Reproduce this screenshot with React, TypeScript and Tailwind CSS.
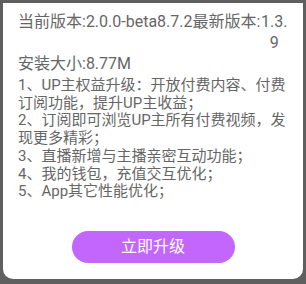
import React from 'react'

const notes = [
  '1、UP主权益升级：开放付费内容、付费订阅功能，提升UP主收益；',
  '2、订阅即可浏览UP主所有付费视频，发现更多精彩；',
  '3、直播新增与主播亲密互动功能；',
  '4、我的钱包，充值交互优化；',
  '5、App其它性能优化；'
]

export default function App() {
  return (
    <div
      className="w-[306px] h-[284px] bg-[#5f5f5f] pt-[3px] px-[3px] pb-[5px]"
      style={{ fontFamily: 'Roboto, "Noto Sans CJK SC", sans-serif' }}
    >
      <div className="h-full bg-white rounded-b-[10px] flex flex-col px-[15px] pt-[8px] text-[#666666]">
        <div className="flex text-[16px] leading-[21px]">
          <span className="shrink-0">当前版本:2.0.0-beta8.7.2最新版本:</span>
          <span className="flex-1 min-w-0 text-center break-all">1.3.9</span>
        </div>
        <div className="text-[16px] leading-[21px]">安装大小:8.77M</div>
        <div className="mt-[3px] text-[15px] leading-[17.7px]">
          {notes.map((note, i) => (
            <div key={i}>{note}</div>
          ))}
        </div>
        <div className="flex justify-center mt-[30px]">
          <button className="w-[163px] h-[32px] rounded-full bg-[#c266fd] text-white text-[16px]">
            立即升级
          </button>
        </div>
      </div>
    </div>
  )
}
